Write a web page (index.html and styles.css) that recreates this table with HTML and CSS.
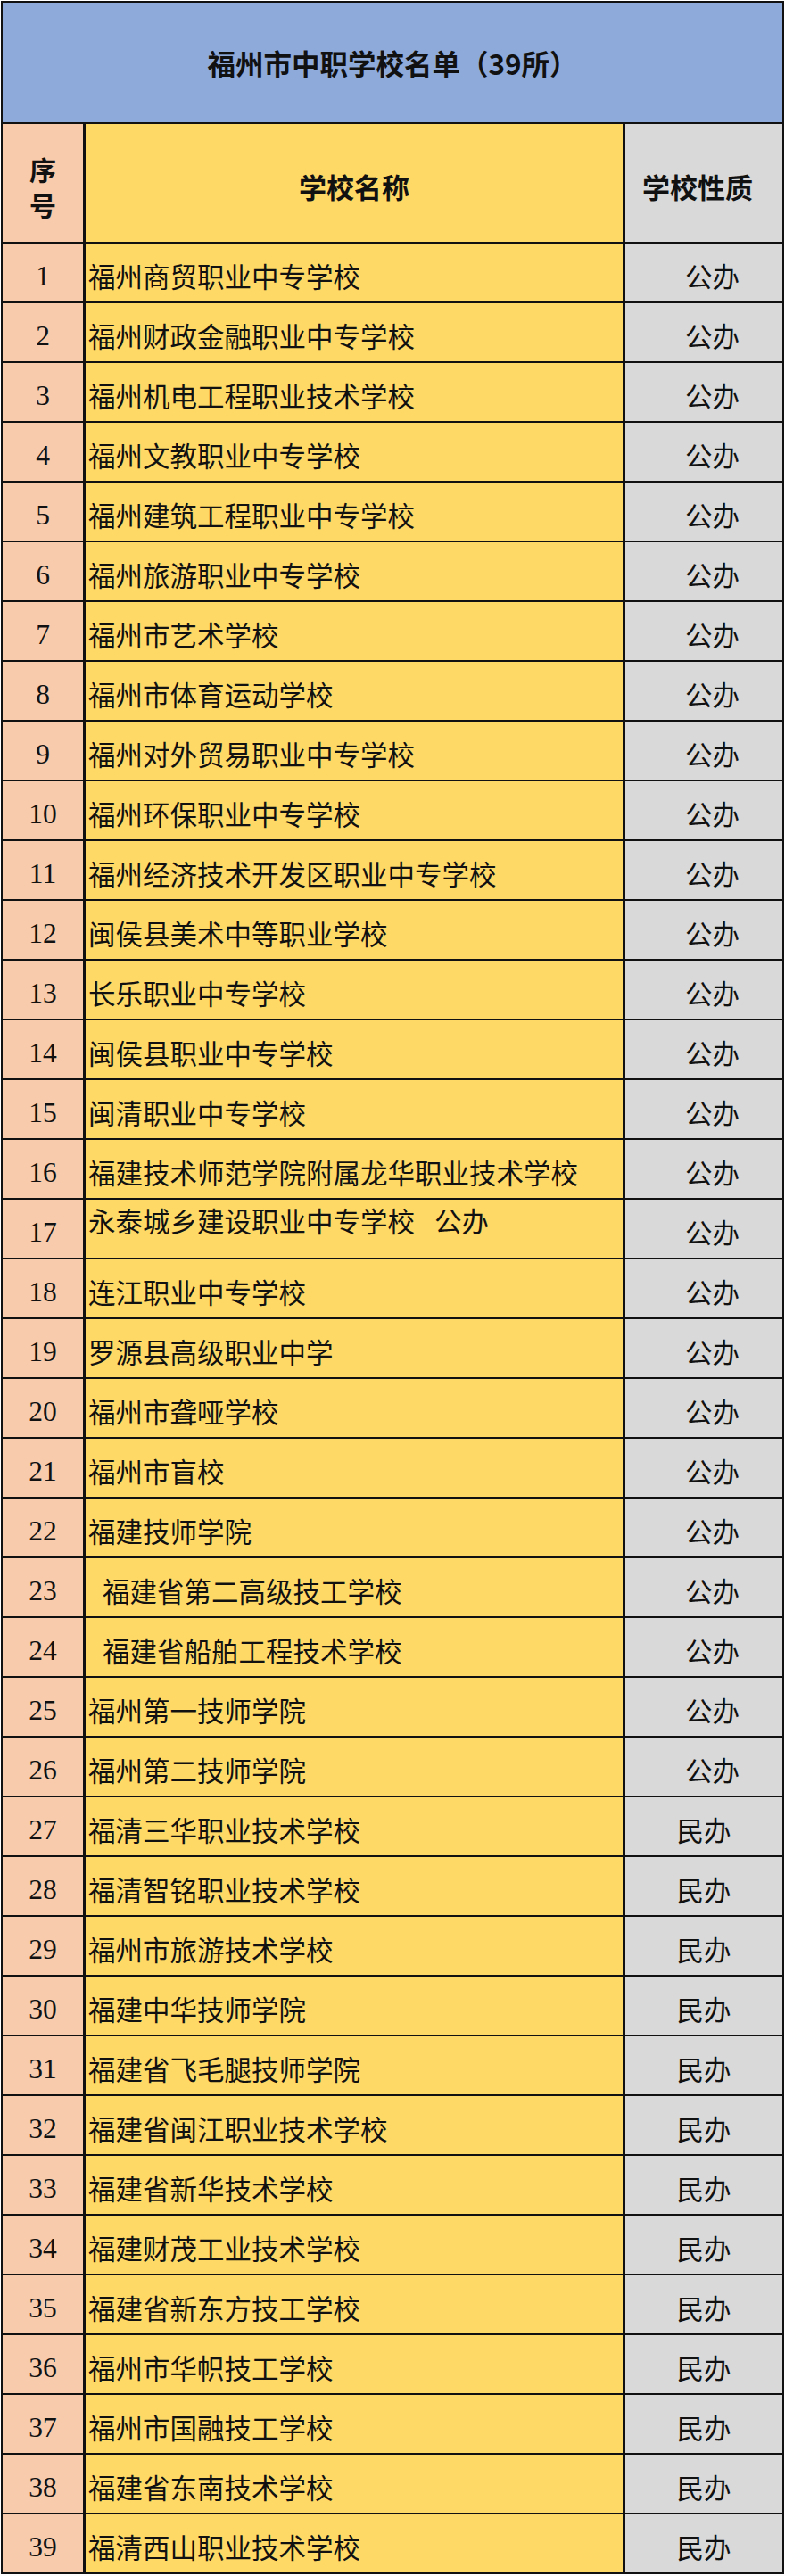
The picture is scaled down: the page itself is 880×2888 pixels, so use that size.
FILE: index.html
```html
<!DOCTYPE html>
<html lang="zh-CN">
<head>
<meta charset="utf-8">
<title>福州市中职学校名单（39所）</title>
<link rel="stylesheet" href="styles.css">
</head>
<body>
<div class="sheet">
  <div class="title">福州市中职学校名单（39所）</div>
  <div class="hd c-no">序<br>号</div>
  <div class="hd c-name-h">学校名称</div>
  <div class="hd c-type-h">学校性质</div>

  <div class="c-no">1</div><div class="c-name">福州商贸职业中专学校</div><div class="c-type pub">公办</div>
  <div class="c-no">2</div><div class="c-name">福州财政金融职业中专学校</div><div class="c-type pub">公办</div>
  <div class="c-no">3</div><div class="c-name">福州机电工程职业技术学校</div><div class="c-type pub">公办</div>
  <div class="c-no">4</div><div class="c-name">福州文教职业中专学校</div><div class="c-type pub">公办</div>
  <div class="c-no">5</div><div class="c-name">福州建筑工程职业中专学校</div><div class="c-type pub">公办</div>
  <div class="c-no">6</div><div class="c-name">福州旅游职业中专学校</div><div class="c-type pub">公办</div>
  <div class="c-no">7</div><div class="c-name">福州市艺术学校</div><div class="c-type pub">公办</div>
  <div class="c-no">8</div><div class="c-name">福州市体育运动学校</div><div class="c-type pub">公办</div>
  <div class="c-no">9</div><div class="c-name">福州对外贸易职业中专学校</div><div class="c-type pub">公办</div>
  <div class="c-no">10</div><div class="c-name">福州环保职业中专学校</div><div class="c-type pub">公办</div>
  <div class="c-no">11</div><div class="c-name">福州经济技术开发区职业中专学校</div><div class="c-type pub">公办</div>
  <div class="c-no">12</div><div class="c-name">闽侯县美术中等职业学校</div><div class="c-type pub">公办</div>
  <div class="c-no">13</div><div class="c-name">长乐职业中专学校</div><div class="c-type pub">公办</div>
  <div class="c-no">14</div><div class="c-name">闽侯县职业中专学校</div><div class="c-type pub">公办</div>
  <div class="c-no">15</div><div class="c-name">闽清职业中专学校</div><div class="c-type pub">公办</div>
  <div class="c-no">16</div><div class="c-name">福建技术师范学院附属龙华职业技术学校</div><div class="c-type pub">公办</div>
  <div class="c-no">17</div><div class="c-name top">永泰城乡建设职业中专学校<span class="sp">公办</span></div><div class="c-type pub">公办</div>
  <div class="c-no">18</div><div class="c-name">连江职业中专学校</div><div class="c-type pub">公办</div>
  <div class="c-no">19</div><div class="c-name">罗源县高级职业中学</div><div class="c-type pub">公办</div>
  <div class="c-no">20</div><div class="c-name">福州市聋哑学校</div><div class="c-type pub">公办</div>
  <div class="c-no">21</div><div class="c-name">福州市盲校</div><div class="c-type pub">公办</div>
  <div class="c-no">22</div><div class="c-name">福建技师学院</div><div class="c-type pub">公办</div>
  <div class="c-no">23</div><div class="c-name ind">福建省第二高级技工学校</div><div class="c-type pub">公办</div>
  <div class="c-no">24</div><div class="c-name ind">福建省船舶工程技术学校</div><div class="c-type pub">公办</div>
  <div class="c-no">25</div><div class="c-name">福州第一技师学院</div><div class="c-type pub">公办</div>
  <div class="c-no">26</div><div class="c-name">福州第二技师学院</div><div class="c-type pub">公办</div>
  <div class="c-no">27</div><div class="c-name">福清三华职业技术学校</div><div class="c-type">民办</div>
  <div class="c-no">28</div><div class="c-name">福清智铭职业技术学校</div><div class="c-type">民办</div>
  <div class="c-no">29</div><div class="c-name">福州市旅游技术学校</div><div class="c-type">民办</div>
  <div class="c-no">30</div><div class="c-name">福建中华技师学院</div><div class="c-type">民办</div>
  <div class="c-no">31</div><div class="c-name">福建省飞毛腿技师学院</div><div class="c-type">民办</div>
  <div class="c-no">32</div><div class="c-name">福建省闽江职业技术学校</div><div class="c-type">民办</div>
  <div class="c-no">33</div><div class="c-name">福建省新华技术学校</div><div class="c-type">民办</div>
  <div class="c-no">34</div><div class="c-name">福建财茂工业技术学校</div><div class="c-type">民办</div>
  <div class="c-no">35</div><div class="c-name">福建省新东方技工学校</div><div class="c-type">民办</div>
  <div class="c-no">36</div><div class="c-name">福州市华帜技工学校</div><div class="c-type">民办</div>
  <div class="c-no">37</div><div class="c-name">福州市国融技工学校</div><div class="c-type">民办</div>
  <div class="c-no">38</div><div class="c-name">福建省东南技术学校</div><div class="c-type">民办</div>
  <div class="c-no">39</div><div class="c-name">福清西山职业技术学校</div><div class="c-type">民办</div>
</div>
</body>
</html>
```

FILE: styles.css
```css
html, body {
  margin: 0;
  padding: 0;
  background: #ffffff;
}

.sheet {
  margin: 1px;
  width: 874px;
  border: 2px solid #111;
  background: #111;
  display: grid;
  grid-template-columns: 90px 602px 176px;
  grid-template-rows: 134px 132px;
  grid-auto-rows: 65px;
  column-gap: 3px;
  row-gap: 2px;
  font-family: "Noto Sans CJK SC", "Liberation Serif", sans-serif;
  font-size: 30.5px;
  line-height: 1.2;
  color: #111;
}

.sheet > div {
  display: flex;
  align-items: center;
  padding-top: 8px;
  box-sizing: border-box;
}

.title {
  grid-column: 1 / 4;
  background: #8eaadb;
  justify-content: center;
  font-weight: 700;
  font-size: 31.5px;
  padding-top: 2px !important;
}

.hd {
  font-weight: 700;
  font-size: 31px;
  justify-content: center;
  text-align: center;
}

.c-no {
  background: #f8cbad;
  justify-content: center;
  font-family: "Liberation Serif", "Noto Sans CJK SC", serif;
  font-size: 31.5px;
}

.hd.c-no {
  font-family: "Noto Sans CJK SC", sans-serif;
  font-size: 30px;
  line-height: 40px;
}

.c-name-h {
  background: #ffd966;
}

.c-type-h {
  background: #d9d9d9;
  padding-right: 14px;
}

.c-name {
  background: #ffd966;
  padding-left: 3px;
  white-space: nowrap;
}

.c-name.ind {
  padding-left: 19px;
}

.c-name.top {
  align-items: flex-start;
  padding-top: 5px;
}

.sp {
  margin-left: 22px;
}

.c-type {
  background: #d9d9d9;
  justify-content: center;
}

.c-type.pub {
  padding-left: 19px;
}
```
